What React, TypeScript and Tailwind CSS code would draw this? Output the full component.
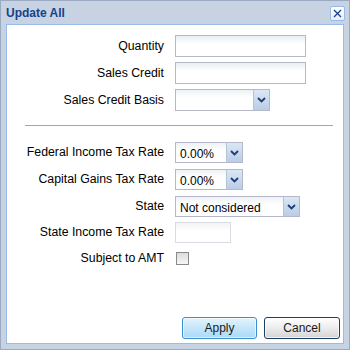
import React from "react";

const font = { fontFamily: '"Liberation Sans", Arial, sans-serif' };

function Chevron() {
  return (
    <svg width="9" height="6" viewBox="0 0 9 6">
      <path d="M1 1 L4.5 4.5 L8 1" fill="none" stroke="#1f3d74" strokeWidth="1.8" />
    </svg>
  );
}

function TextField({ w }: { w: string }) {
  return (
    <div
      className={`${w} h-[22px] border border-[#b5b8c8] bg-[linear-gradient(to_bottom,#e9eef2_0px,#ffffff_8px,#ffffff_100%)]`}
    />
  );
}

function Combo({ w, value, h = "h-[21px]" }: { w: string; value?: string; h?: string }) {
  return (
    <div className={`${w} ${h} flex border border-[#b5b8c8]`}>
      <div className="flex-1 flex items-center pl-[4px] text-[12px] text-black bg-[linear-gradient(to_bottom,#eef2f5_0px,#ffffff_8px,#ffffff_100%)] leading-none pt-[2px]">
        {value}
      </div>
      <div className="w-[16px] border-l border-[#b5c3d8] flex items-center justify-center bg-[linear-gradient(to_bottom,#dce7f5,#b9cde6)]">
        <Chevron />
      </div>
    </div>
  );
}

function Row({
  label,
  children,
  mt,
  h = "h-[22px]",
}: {
  label: string;
  children: React.ReactNode;
  mt: string;
  h?: string;
}) {
  return (
    <div className={`flex items-center ${mt} ${h}`}>
      <div className="w-[157px] text-right text-[12.3px] text-black">{label}</div>
      <div className="ml-[11px] flex items-center">{children}</div>
    </div>
  );
}

export default function App() {
  return (
    <div
      className="w-[350px] h-[350px] flex flex-col bg-[#c7d3e3] border border-[#9aaac2]"
      style={font}
    >
      <div className="h-[23px] flex items-center justify-between pl-[5px] pr-[4px]">
        <span className="text-[12px] font-bold text-[#15428b] pt-[1px]">Update All</span>
        <div className="w-[15px] h-[15px] mt-[1px] rounded-[2px] border border-[#99bbe8] bg-[linear-gradient(to_bottom,#ffffff,#e8eef7)] flex items-center justify-center">
          <svg width="9" height="9" viewBox="0 0 9 9">
            <path d="M1 1 L8 8 M8 1 L1 8" stroke="#15428b" strokeWidth="1.3" />
          </svg>
        </div>
      </div>
      <div className="flex-1 mx-[5px] mb-[5px] border border-[#99bbe8] bg-white flex flex-col">
        <Row label="Quantity" mt="mt-[10px]">
          <TextField w="w-[131px]" />
        </Row>
        <Row label="Sales Credit" mt="mt-[5px]">
          <TextField w="w-[131px]" />
        </Row>
        <Row label="Sales Credit Basis" mt="mt-[5px]">
          <Combo w="w-[95px]" h="h-[22px]" />
        </Row>
        <div className="ml-[18px] mt-[14px] w-[308px] h-px bg-[#a6a6a6]" />
        <Row label="Federal Income Tax Rate" mt="mt-[16px]" h="h-[21px]">
          <Combo w="w-[68px]" value="0.00%" />
        </Row>
        <Row label="Capital Gains Tax Rate" mt="mt-[6px]" h="h-[21px]">
          <Combo w="w-[68px]" value="0.00%" />
        </Row>
        <Row label="State" mt="mt-[6px]" h="h-[21px]">
          <Combo w="w-[125px]" value="Not considered" />
        </Row>
        <Row label="State Income Tax Rate" mt="mt-[5px]" h="h-[21px]">
          <div className="w-[56px] h-[21px] border border-[#d9dbe3] bg-[linear-gradient(to_bottom,#f2f4f6_0px,#ffffff_8px,#ffffff_100%)]" />
        </Row>
        <Row label="Subject to AMT" mt="mt-[4px]" h="h-[22px]">
          <div className="ml-[1px] w-[13px] h-[13px] border border-[#8a8a8a] bg-[linear-gradient(to_bottom,#dcdcdc,#f6f6f6)]" />
        </Row>
        <div className="flex justify-end mt-[48px] mr-[3px] gap-[7px]">
          <button className="w-[75px] h-[22px] rounded-[3px] border border-[#3c8fd0] bg-[linear-gradient(to_bottom,#e4f4fd,#c4e6fa_50%,#a9daf6)] text-[12px] text-[#1a1a1a] shadow-[inset_0_0_0_1px_rgba(255,255,255,0.6)]">
            Apply
          </button>
          <button className="w-[76px] h-[22px] rounded-[3px] border border-[#1e3f64] bg-[linear-gradient(to_bottom,#ffffff,#ececec_50%,#d4d4d4)] text-[12px] text-[#1a1a1a] shadow-[inset_0_0_0_1px_rgba(255,255,255,0.7)]">
            Cancel
          </button>
        </div>
      </div>
    </div>
  );
}
